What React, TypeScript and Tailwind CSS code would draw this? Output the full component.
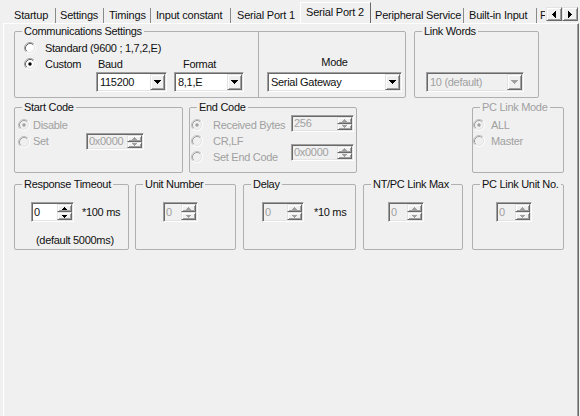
import React from "react";

// classic win32 bevels
const SUNKEN =
  "border border-t-[#a0a0a0] border-l-[#a0a0a0] border-r-white border-b-white p-[1px] shadow-[inset_1px_1px_0_#696969,inset_-1px_-1px_0_#e3e3e3]";
const RAISED =
  "bg-[#f0f0f0] border border-t-[#e3e3e3] border-l-[#e3e3e3] border-r-[#696969] border-b-[#696969] shadow-[inset_1px_1px_0_#ffffff,inset_-1px_-1px_0_#a0a0a0]";

function Radio({ checked = false, disabled = false }: { checked?: boolean; disabled?: boolean }) {
  return (
    <svg width="12" height="12" viewBox="0 0 12 12" className="shrink-0">
      <circle cx="6" cy="6" r="4.5" fill={disabled ? "#f0f0f0" : "#ffffff"} />
      <path d="M2.11 9.89A5.5 5.5 0 0 1 9.89 2.11" fill="none" stroke={disabled ? "#c0c0c0" : "#a0a0a0"} />
      <path d="M2.82 9.18A4.5 4.5 0 0 1 9.18 2.82" fill="none" stroke={disabled ? "#a0a0a0" : "#696969"} />
      <path d="M9.89 2.11A5.5 5.5 0 0 1 2.11 9.89" fill="none" stroke="#ffffff" />
      <path d="M9.18 2.82A4.5 4.5 0 0 1 2.82 9.18" fill="none" stroke="#e3e3e3" />
      {checked && <circle cx="6" cy="6" r="1.7" fill={disabled ? "#a0a0a0" : "#000000"} />}
    </svg>
  );
}

function Arrow({ dir, disabled = false }: { dir: "up" | "down" | "combo" | "left" | "right"; disabled?: boolean }) {
  const fill = disabled ? "#a0a0a0" : "#000000";
  if (dir === "combo")
    return (
      <svg width="7" height="4" viewBox="0 0 7 4" shapeRendering="crispEdges">
        <path d="M0 0h7v1H0zM1 1h5v1H1zM2 2h3v1H2zM3 3h1v1H3z" fill={fill} />
      </svg>
    );
  if (dir === "up")
    return (
      <svg width="5" height="3" viewBox="0 0 5 3" shapeRendering="crispEdges">
        <path d="M2 0h1v1H2zM1 1h3v1H1zM0 2h5v1H0z" fill={fill} />
      </svg>
    );
  if (dir === "down")
    return (
      <svg width="5" height="3" viewBox="0 0 5 3" shapeRendering="crispEdges">
        <path d="M0 0h5v1H0zM1 1h3v1H1zM2 2h1v1H2z" fill={fill} />
      </svg>
    );
  if (dir === "left")
    return (
      <svg width="4" height="7" viewBox="0 0 4 7" shapeRendering="crispEdges">
        <path d="M3 0h1v7H3zM2 1h1v5H2zM1 2h1v3H1zM0 3h1v1H0z" fill={fill} />
      </svg>
    );
  return (
    <svg width="4" height="7" viewBox="0 0 4 7" shapeRendering="crispEdges">
      <path d="M0 0h1v7H0zM1 1h1v5H1zM2 2h1v3H2zM3 3h1v1H3z" fill={fill} />
    </svg>
  );
}

function Combo({ value, disabled = false, className = "" }: { value: string; disabled?: boolean; className?: string }) {
  return (
    <div className={`flex shrink-0 h-[20px] ${SUNKEN} ${disabled ? "bg-[#f0f0f0] text-[#a0a0a0]" : "bg-white"} ${className}`}>
      <span className="flex-1 flex items-center pl-[2px] whitespace-nowrap overflow-hidden">{value}</span>
      <div className={`w-[15px] flex items-center justify-center ${RAISED}`}>
        <Arrow dir="combo" disabled={disabled} />
      </div>
    </div>
  );
}

function Spin({ value, disabled = false, className = "" }: { value: string; disabled?: boolean; className?: string }) {
  return (
    <div className={`flex shrink-0 ${SUNKEN} ${disabled ? "bg-[#f0f0f0] text-[#a0a0a0]" : "bg-white"} ${className}`}>
      <span className="flex-1 flex items-center pl-[1px] whitespace-nowrap overflow-hidden">{value}</span>
      <div className="w-[15px] flex flex-col">
        <div className={`flex-1 flex items-center justify-center ${RAISED}`}>
          <Arrow dir="up" disabled={disabled} />
        </div>
        <div className={`flex-1 flex items-center justify-center ${RAISED}`}>
          <Arrow dir="down" disabled={disabled} />
        </div>
      </div>
    </div>
  );
}

function Group({
  label,
  dim = false,
  className = "",
  children,
}: {
  label: string;
  dim?: boolean;
  className?: string;
  children?: React.ReactNode;
}) {
  return (
    <div className={`relative shrink-0 border border-[#b0b0b0] rounded-[2px] ${className}`}>
      <span className={`absolute left-[7px] top-[-7px] px-[2px] bg-[#f0f0f0] whitespace-nowrap ${dim ? "text-[#a0a0a0]" : ""}`}>
        {label}
      </span>
      {children}
    </div>
  );
}

function Option({
  label,
  checked = false,
  disabled = false,
  gap = "gap-[9px]",
  className = "",
}: {
  label: string;
  checked?: boolean;
  disabled?: boolean;
  gap?: string;
  className?: string;
}) {
  return (
    <div className={`flex items-center h-[16px] whitespace-nowrap ${gap} ${disabled ? "text-[#a0a0a0]" : ""} ${className}`}>
      <Radio checked={checked} disabled={disabled} />
      <span>{label}</span>
    </div>
  );
}

const tabs = [
  { label: "Startup", cls: "w-[47px] pl-[5px]" },
  { label: "Settings", cls: "w-[48px] pl-[4px]" },
  { label: "Timings", cls: "w-[47px] pl-[5px]" },
  { label: "Input constant", cls: "w-[80px] pl-[5px]" },
  { label: "Serial Port 1", cls: "w-[69px] pl-[6px] border-r-0" },
];
const tabsAfter = [
  { label: "Peripheral Service", cls: "w-[93px] pl-[4px]" },
  { label: "Built-in Input", cls: "w-[73px] pl-[5px]" },
  { label: "PLC Setup", cls: "w-[60px] pl-[3px]" },
];

function TabStrip() {
  return (
    <div className="h-[23px] flex tracking-[-0.2px]">
      <div className="w-[545px] h-full flex items-end pl-[9px] overflow-hidden">
        {tabs.map((t) => (
          <div key={t.label} className={`shrink-0 h-[15px] border-r border-r-[#8a8a8a] whitespace-nowrap overflow-hidden pt-[1px] ${t.cls}`}>
            {t.label}
          </div>
        ))}
        <div className="relative z-10 shrink-0 w-[71px] h-[22px] -mb-px bg-[#f0f0f0] border-l border-t border-r border-l-white border-t-white border-r-[#696969] pl-[5px] pt-[3px] whitespace-nowrap">
          Serial Port 2
        </div>
        {tabsAfter.map((t) => (
          <div key={t.label} className={`shrink-0 h-[15px] border-r border-r-[#8a8a8a] whitespace-nowrap overflow-hidden pt-[1px] ${t.cls}`}>
            {t.label}
          </div>
        ))}
      </div>
      <div className="flex pl-[1px] pt-[7px]">
        <div className={`w-[16px] h-[14px] flex items-center justify-center ${RAISED}`}>
          <Arrow dir="left" />
        </div>
        <div className={`w-[16px] h-[14px] flex items-center justify-center ${RAISED}`}>
          <Arrow dir="right" />
        </div>
      </div>
    </div>
  );
}

export default function App() {
  return (
    <div className="w-[580px] h-[416px] overflow-hidden bg-[#f0f0f0] text-[#111] text-[11px] leading-[13px] font-['Liberation_Sans',Arial,sans-serif] flex flex-col">
      <TabStrip />
      <div className="ml-[3px] w-[576px] flex-1 flex flex-col border-l border-t border-r border-l-white border-t-white border-r-[#696969] shadow-[inset_-1px_0_0_#a0a0a0] pl-[10px] pt-[7px] tracking-[-0.3px]">
        {/* row 1 */}
        <div className="flex gap-[8px]">
          <Group label="Communications Settings" className="w-[392px] h-[67px] flex">
            <div className="w-[243px] flex flex-col pl-[9px] pt-[8px]">
              <Option label="Standard (9600 ; 1,7,2,E)" />
              <div className="flex items-center h-[16px]">
                <Option label="Custom" checked className="w-[72px]" />
                <span className="w-[87px] pl-[2px]">Baud</span>
                <span>Format</span>
              </div>
              <div className="flex gap-[7px] ml-[72px]">
                <Combo value="115200" className="w-[71px]" />
                <Combo value="8,1,E" className="w-[70px]" />
              </div>
            </div>
            <div className="w-[147px] border-l border-[#b0b0b0] pl-[8px] pt-[24px] flex flex-col">
              <div className="w-[135px] h-[16px] text-center">Mode</div>
              <Combo value="Serial Gateway" className="w-[135px]" />
            </div>
          </Group>
          <Group label="Link Words" className="w-[125px] h-[67px] pl-[11px] pt-[40px]">
            <Combo value="10 (default)" disabled className="w-[98px]" />
          </Group>
        </div>

        {/* row 2 */}
        <div className="flex mt-[9px]">
          <Group label="Start Code" className="w-[169px] h-[66px] pl-[3px] pt-[9px] flex flex-col">
            <Option label="Disable" checked disabled gap="gap-[3px]" />
            <div className="flex items-center h-[17px]">
              <Option label="Set" disabled gap="gap-[3px]" className="w-[68px]" />
              <Spin value="0x0000" disabled className="w-[58px] h-[17px]" />
            </div>
          </Group>
          <Group label="End Code" className="ml-[6px] w-[168px] h-[66px] pl-[1px] flex">
            <div className="w-[100px] pt-[9px] flex flex-col">
              <Option label="Received Bytes" checked disabled gap="gap-[10px]" />
              <Option label="CR,LF" disabled gap="gap-[10px]" />
              <Option label="Set End Code" disabled gap="gap-[10px]" />
            </div>
            <div className="pt-[7px] flex flex-col">
              <Spin value="256" disabled className="w-[63px] h-[17px]" />
              <Spin value="0x0000" disabled className="w-[63px] h-[17px] mt-[12px]" />
            </div>
          </Group>
          <Group label="PC Link Mode" dim className="ml-[115px] w-[92px] h-[66px] pt-[9px] flex flex-col">
            <Option label="ALL" checked disabled gap="gap-[6px]" />
            <Option label="Master" disabled gap="gap-[6px]" />
          </Group>
        </div>

        {/* row 3 */}
        <div className="flex mt-[11px]">
          <Group label="Response Timeout" className="w-[115px] h-[66px] pt-[17px] flex flex-col">
            <div className="flex items-center pl-[16px]">
              <Spin value="0" className="w-[43px] h-[20px]" />
              <span className="ml-[8px]">*100 ms</span>
            </div>
            <div className="ml-[21px] mt-[12px] whitespace-nowrap">(default 5000ms)</div>
          </Group>
          <Group label="Unit Number" className="ml-[6px] w-[101px] h-[66px] pl-[27px] pt-[17px]">
            <Spin value="0" disabled className="w-[35px] h-[20px]" />
          </Group>
          <Group label="Delay" className="ml-[7px] w-[113px] h-[66px] pl-[18px] pt-[17px]">
            <div className="flex items-center">
              <Spin value="0" disabled className="w-[42px] h-[20px]" />
              <span className="ml-[10px]">*10 ms</span>
            </div>
          </Group>
          <Group label="NT/PC Link Max" className="ml-[7px] w-[100px] h-[66px] pl-[24px] pt-[17px]">
            <Spin value="0" disabled className="w-[36px] h-[20px]" />
          </Group>
          <Group label="PC Link Unit No." className="ml-[9px] w-[92px] h-[66px] pl-[23px] pt-[17px]">
            <Spin value="0" disabled className="w-[36px] h-[20px]" />
          </Group>
        </div>
      </div>
    </div>
  );
}
